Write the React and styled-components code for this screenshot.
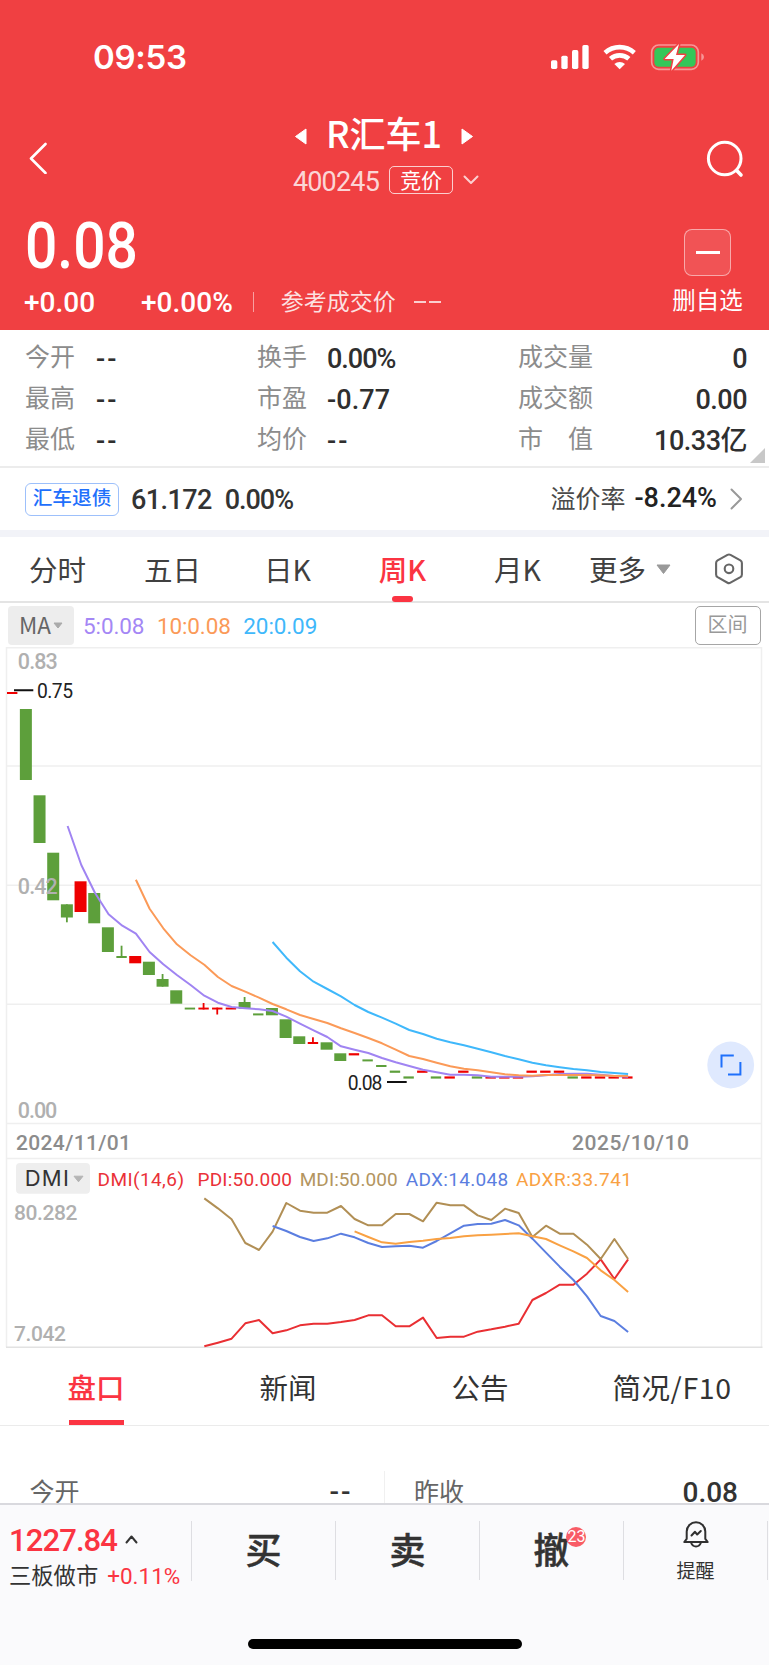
import React from "react";
import styled, { createGlobalStyle } from "styled-components";

const NUM = `Roboto, "Noto Sans CJK SC", sans-serif`;
const CJK = `"Noto Sans CJK SC", sans-serif`;

const Global = createGlobalStyle`
  * { box-sizing: border-box; }
  html, body { margin: 0; padding: 0; background: #fff; }
  body { font-family: ${CJK}; color: #333; overflow: hidden; }
  svg { display: block; flex: none; }
`;

const Screen = styled.div`
  width: 769px;
  height: 1665px;
  overflow: hidden;
  display: flex;
  flex-direction: column;
  background: #fff;
`;

const Label = styled.span`
  font-family: ${CJK};
  font-size: ${(p) => p.$size || 25}px;
  font-weight: ${(p) => p.$weight || 400};
  color: ${(p) => p.$color || "inherit"};
  letter-spacing: ${(p) => p.$ls || 0}px;
  line-height: 1;
  white-space: pre;
  flex: none;
  transform: translateY(${(p) => p.$dy ?? -1}px);
`;

const Num = styled(Label)`
  font-family: ${NUM};
  font-weight: ${(p) => p.$weight || 500};
`;

const Price = styled(Num)`
  transform: translate(1px, 2px) scaleX(0.89);
  transform-origin: left center;
`;

/* ---------- header ---------- */
const Header = styled.header`
  height: 330px;
  flex: none;
  background: #f04042;
  color: #fff;
  display: flex;
  flex-direction: column;
`;

const StatusBar = styled.div`
  height: 80px;
  padding: 35px 49px 0 93px;
  display: flex;
  justify-content: space-between;
`;

const Clock = styled.span`
  font-family: Inter, sans-serif;
  font-weight: 600;
  font-size: 33px;
  line-height: 45px;
  letter-spacing: -0.3px;
`;

const TitleBar = styled.div`
  height: 120px;
  padding: 0 24px 0 28px;
  display: flex;
  justify-content: space-between;
  align-items: flex-start;
`;

const IconSlot = styled.div`
  width: 40px;
  padding-top: ${(p) => p.$top}px;
  display: flex;
  justify-content: ${(p) => p.$align};
`;

const TitleBlock = styled.div`
  padding-top: 36px;
  margin-right: 1px;
  display: flex;
  flex-direction: column;
  align-items: center;
`;

const TitleRow = styled.div`
  height: 40px;
  padding-right: 4px;
  display: flex;
  align-items: center;
  gap: 19px;
`;

const CodeRow = styled.div`
  height: 28px;
  margin-top: 10px;
  display: flex;
  align-items: center;
  gap: 10px;
`;

const AuctionTag = styled.span`
  width: 64px;
  height: 28px;
  border: 1.5px solid rgba(255, 255, 255, 0.75);
  border-radius: 5px;
  display: flex;
  align-items: center;
  justify-content: center;
`;

const PriceArea = styled.div`
  height: 130px;
  padding: 0 26px 0 24px;
  display: flex;
  justify-content: space-between;
`;

const PriceColumn = styled.div`
  padding-top: 13px;
  display: flex;
  flex-direction: column;
  gap: 9px;
`;

const ChangeRow = styled.div`
  height: 28px;
  display: flex;
  align-items: center;
  margin-top: 2px;
`;

const Bar = styled.i`
  width: ${(p) => p.$w || 1}px;
  height: ${(p) => p.$h}px;
  margin: ${(p) => p.$m || 0};
  background: ${(p) => p.$color};
  flex: none;
`;

const RemoveButton = styled.div`
  width: 71px;
  padding-top: 29px;
  display: flex;
  flex-direction: column;
  align-items: center;
  gap: 13px;
`;

const MinusBox = styled.div`
  width: 47px;
  height: 47px;
  border: 1.5px solid rgba(255, 255, 255, 0.5);
  border-radius: 8px;
  background: rgba(255, 255, 255, 0.1);
  display: flex;
  align-items: center;
  justify-content: center;
`;

/* ---------- quote statistics ---------- */
const Stats = styled.section`
  height: 138px;
  flex: none;
  padding: 7px 0 0 25px;
  border-bottom: 2px solid #ececec;
  display: grid;
  grid-template-columns: 232px 261px 1fr;
  grid-auto-rows: 41px;
  position: relative;
`;

const Stat = styled.div`
  display: flex;
  align-items: center;
  color: #2f2f2f;
  gap: ${(p) => p.$gap || 0}px;
  ${(p) => p.$wide && "justify-content: space-between; padding-right: 22px;"}
`;

const Corner = styled.i`
  position: absolute;
  right: 4px;
  bottom: 3px;
  border-left: 15px solid transparent;
  border-bottom: 15px solid #c8c8c8;
`;

const Bond = styled.section`
  height: 69px;
  flex: none;
  padding: 0 26px 0 25px;
  border-bottom: 7px solid #f2f3f8;
  display: flex;
  align-items: center;
`;

const BondTag = styled.span`
  width: 94px;
  height: 33px;
  border: 1.5px solid #9dc0fb;
  border-radius: 6px;
  display: flex;
  align-items: center;
  justify-content: center;
  margin-right: 12px;
`;

const Spacer = styled.span`
  flex: ${(p) => (p.$w ? "none" : 1)};
  width: ${(p) => p.$w || 0}px;
`;

/* ---------- period tabs ---------- */
const Periods = styled.nav`
  height: 66px;
  flex: none;
  padding-right: 26px;
  border-bottom: 2px solid #e4e4e4;
  display: flex;
`;

const Period = styled.div`
  width: 115px;
  height: 65px;
  display: flex;
  flex-direction: column;
  align-items: center;
  justify-content: space-between;
  padding-top: 19px;
  color: ${(p) => (p.$active ? "#fb3442" : "#404040")};
`;

const PeriodMark = styled.i`
  width: 21px;
  height: 6px;
  border-radius: 3px;
  background: ${(p) => (p.$active ? "#fb3442" : "transparent")};
`;

const More = styled.div`
  flex: 1;
  display: flex;
  align-items: center;
  padding-left: 14px;
  color: #404040;
`;

const MaRow = styled.div`
  height: 44px;
  flex: none;
  padding: 0 8.5px 0 8px;
  display: flex;
  align-items: center;
`;

const MaButton = styled.div`
  width: 66px;
  height: 39px;
  border-radius: 4px;
  background: #ededed;
  display: flex;
  align-items: center;
  justify-content: center;
  gap: 2px;
  margin-right: 9px;
`;

const RangeButton = styled.div`
  width: 66px;
  height: 39px;
  border: 1.5px solid #a6a6a6;
  border-radius: 5px;
  display: flex;
  align-items: center;
  justify-content: center;
`;

const ChartArea = styled.section`
  height: 701px;
  flex: none;
`;

/* ---------- detail tabs ---------- */
const DetailTabs = styled.nav`
  height: 78px;
  flex: none;
  border-bottom: 1.5px solid #ebebeb;
  display: grid;
  grid-template-columns: repeat(4, 192px);
`;

const DetailTab = styled.div`
  display: flex;
  flex-direction: column;
  align-items: center;
  justify-content: space-between;
  padding-top: 26px;
  color: ${(p) => (p.$active ? "#fb3442" : "#333")};
`;

const DetailMark = styled.i`
  width: 55px;
  height: 5px;
  background: ${(p) => (p.$active ? "#fb3442" : "transparent")};
`;

const DetailRow = styled.section`
  height: 77px;
  flex: none;
  padding-top: 45px;
  display: grid;
  grid-template-columns: 384.5px 1fr;
`;

const DetailCell = styled.div`
  height: 40px;
  padding: 0 31px 0 29.5px;
  display: flex;
  justify-content: space-between;
  align-items: center;
  border-right: ${(p) => (p.$line ? "1px solid #f0f0f0" : "none")};
`;

/* ---------- bottom bar ---------- */
const Bottom = styled.footer`
  flex: 1;
  position: relative;
  background: #fafafc;
  border-top: 2px solid #d9d9de;
  display: flex;
  flex-direction: column;
  align-items: center;
`;

const Actions = styled.div`
  width: 769px;
  height: 134px;
  padding-top: 16px;
  display: flex;
`;

const IndexBlock = styled.div`
  width: 192px;
  height: 60px;
  padding-left: 9px;
  display: flex;
  flex-direction: column;
  gap: 7px;
  border-right: 1.5px solid #dedee2;
`;

const Line = styled.div`
  display: flex;
  align-items: center;
  flex: none;
  gap: ${(p) => p.$gap}px;
  height: ${(p) => p.$h}px;
`;

const Action = styled.div`
  width: 144px;
  height: 59px;
  border-right: 1.5px solid #dedee2;
  display: flex;
  flex-direction: column;
  align-items: center;
  justify-content: ${(p) => (p.$stack ? "space-between" : "center")};
`;

const ActionLabel = styled(Label)`
  font-size: 36px;
  font-weight: 500;
  -webkit-text-stroke: 0.5px #333;
  transform: translateY(-3px);
`;

const Badged = styled.span`
  position: relative;
  display: flex;
`;

const Badge = styled.span`
  position: absolute;
  left: 33px;
  top: -6px;
  width: 20px;
  height: 20px;
  border-radius: 50%;
  background: #f85c66;
  display: flex;
  align-items: center;
  justify-content: center;
`;

const HomeBar = styled.i`
  width: 274px;
  height: 10px;
  border-radius: 5px;
  background: #000;
`;

/* ---------- icons ---------- */
const Tri = ({ d, w, h, color }) => (
  <svg width={w} height={h} viewBox={`0 0 ${w} ${h}`}>
    <path d={d} fill={color} stroke={color} strokeWidth="1" strokeLinejoin="round" />
  </svg>
);

const Chevron = ({ w, h, d, color, sw = 2 }) => (
  <svg width={w} height={h} viewBox={`0 0 ${w} ${h}`}>
    <path d={d} fill="none" stroke={color} strokeWidth={sw} strokeLinecap="round" strokeLinejoin="round" />
  </svg>
);

const SystemIcons = () => (
  <svg width="180" height="45" viewBox="0 0 540 135">
    <g fill="#fff">
      <rect x="33" y="76" width="19" height="26" rx="5" />
      <rect x="64" y="62" width="19" height="40" rx="5" />
      <rect x="96" y="45" width="19" height="57" rx="5" />
      <rect x="127" y="30" width="19" height="72" rx="5" />
    </g>
    <g fill="none" stroke="#fff" strokeWidth="14">
      <path d="M195 53A67 67 0 0 1 283 53" />
      <path d="M211.500 71.500A41 41 0 0 1 266.500 71.500" />
    </g>
    <path d="M239 103L223 87A24 24 0 0 1 255 87Z" fill="#fff" />
    <rect x="335" y="30" width="140" height="73" rx="21" fill="none" stroke="#f79697" strokeWidth="5" />
    <rect x="343" y="38" width="124" height="57" rx="13" fill="#34c759" />
    <path d="M484 55q8 3 8 11t-8 11z" fill="#f79697" />
    <path
      d="M417 27L374 72H401L394 107L435 60H408Z"
      fill="#fff"
      stroke="#f04042"
      strokeWidth="9"
      strokeLinejoin="round"
      paintOrder="stroke"
    />
  </svg>
);

const SearchIcon = () => (
  <svg width="40" height="42" viewBox="0 0 40 42">
    <g fill="none" stroke="#fff" strokeWidth="3" strokeLinecap="round">
      <circle cx="19.700" cy="20.500" r="16.300" />
      <path d="M31.700 32.500L36 37" strokeWidth="3.600" />
    </g>
  </svg>
);

const HexIcon = () => (
  <svg width="28" height="32" viewBox="0 0 28 32">
    <g fill="none" stroke="#666" strokeWidth="2.100" strokeLinejoin="round">
      <path d="M12.500 1.900Q14 1.100 15.500 1.900L25.400 7.400Q26.900 8.300 26.900 10V21.500Q26.900 23.300 25.400 24.200L15.500 29.700Q14 30.500 12.500 29.700L2.600 24.200Q1.100 23.300 1.100 21.500V10Q1.100 8.300 2.600 7.400Z" />
      <circle cx="14" cy="15.800" r="4.300" />
    </g>
  </svg>
);

const BellIcon = () => (
  <svg width="26" height="27" viewBox="0 0 26 27">
    <g fill="none" stroke="#303030" strokeWidth="2" strokeLinecap="round" strokeLinejoin="round">
      <path d="M1.300 21H24.700L22.300 17.800V10.500A9.300 9.300 0 0 0 3.700 10.500V17.800Z" />
      <path d="M8 21.500Q9.500 25.500 13 25.500T18 21.500" />
      <path d="M8.500 14.500L12 10.800L14.200 13.500L17.800 10" />
    </g>
  </svg>
);

/* ---------- chart ---------- */
const X0 = 12.2;
const STEP = 13.67;
const TOP = 647;
const cx = (i) => X0 + STEP * i;

// [colour, body top, body bottom, wick end]
const candles = [
  ["r", 692, 694], ["g", 709, 780], ["g", 795.3, 843], ["g", 852.7, 900.3], ["g", 904.3, 917.5, 922.3],
  ["r", 881.3, 912], ["g", 893, 923.3], ["g", 927.3, 952], ["g", 956, 958, 945.7], ["r", 956, 963.3],
  ["g", 961.7, 975], ["g", 979, 986.7, 974], ["g", 990.3, 1003.7], ["g", 1007.6, 1009.5], ["r", 1007.6, 1009.5, 1003],
  ["r", 1007.6, 1009.5, 1014.5], ["r", 1007.6, 1009.5], ["g", 1002, 1008.7, 997], ["g", 1013.4, 1015.4], ["g", 1008, 1015.3],
  ["g", 1019.3, 1038], ["g", 1036.3, 1044], ["r", 1042, 1044, 1037.3], ["g", 1042.3, 1049.7], ["g", 1053.3, 1061],
  ["r", 1053.2, 1055.4], ["g", 1059.4, 1061.4], ["g", 1065, 1067],
  ...["g0", "g1", "r0", "g1", "r1", "r0", "g1", "r1", "r1", "r1", "r0", "r0", "r0", "g1", "r1", "r1", "r1", "r1"].map(
    (s) => (s[1] === "0" ? [s[0], 1070.6, 1072.8] : [s[0], 1076.4, 1078.6])
  ),
];

const ma5 = [826, 865, 892.7, 914.3, 925.7, 933.7, 952, 964.3, 975, 985, 995.7, 1002.7, 1007, 1008.3, 1009.3, 1011, 1016.7, 1023.7, 1030.3, 1037, 1046.3, 1049.7, 1053, 1058, 1062.3, 1066, 1069.7, 1072.3, 1074.7, 1074.7, 1075.3, 1076.7, 1076.7, 1076.7, 1076.3, 1075.3, 1074, 1073.7, 1073.7, 1074.7, 1076, 1076.7];
const ma10 = [879.7, 908.7, 928.3, 944.3, 955.3, 964.7, 977, 986, 991.7, 997.7, 1004, 1009.3, 1015, 1019, 1023, 1028.3, 1033, 1038, 1043.3, 1049.7, 1056, 1059, 1062.7, 1066.3, 1068.7, 1070.3, 1072.3, 1074.3, 1075.3, 1075.7, 1075, 1075, 1075, 1075, 1075.3, 1076, 1076];
const ma20 = [942, 957.7, 971.3, 981.7, 989, 996.3, 1005, 1012, 1017.7, 1023.7, 1030, 1034, 1038.7, 1042.3, 1045.3, 1048.7, 1052.3, 1056, 1059.3, 1062.7, 1065.3, 1067.3, 1069, 1070.3, 1072, 1073, 1074];

// DMI series in thirds of a pixel, measured from y = 1150
const dmi = (list) => list.map((v) => 1150 + v / 3);
const mdi = dmi([145, 175, 208, 279, 300, 245, 159, 182, 188, 188, 168, 207, 226, 226, 192, 192, 214, 158, 166, 166, 196, 210, 176, 189, 261, 227, 251, 251, 284, 327, 267, 327]);
const pdi = dmi([589, 578, 566, 520, 510, 550, 541, 526, 521, 521, 516, 510, 496, 496, 529, 529, 503, 564, 560, 560, 545, 538, 530, 521, 450, 429, 404, 404, 371, 328, 387, 328]);
const adx = dmi([228, 243, 261, 273, 265, 251, 262, 279, 291, 289, 287, 293, 273, 250, 227, 222, 221, 210, 226, 266, 308, 350, 390, 439, 498, 513, 546]);
const adxr = dmi([244, 261, 277, 281, 276, 272, 267, 264, 259, 256, 254, 252, 250, 259, 267, 286, 304, 324, 361, 390, 426]);

const Series = ({ from, data, color }) => (
  <polyline
    points={data.map((y, i) => `${(cx(from + i) + 0.7).toFixed(1)},${y}`).join(" ")}
    fill="none"
    stroke={color}
    strokeWidth="2"
    strokeLinejoin="round"
  />
);

const T = ({ x, y, w, size, color, weight = 400, children }) => (
  <text x={x} y={y} textLength={w} fontSize={size} fontWeight={weight} fill={color} fontFamily={NUM}>
    {children}
  </text>
);

const Chart = () => (
  <svg width="769" height="701" viewBox={`0 ${TOP} 769 701`}>
    <g fill="none" stroke="#efefef" strokeWidth="1.500">
      <path d="M6.500 647.800H761.500M6.500 766H761.500M6.500 885.300H761.500M6.500 1004.300H761.500M6.500 1123.400H761.500M6.500 1158.400H761.500" />
      <path d="M6.500 647V1347M761.500 647V1347" />
      <path d="M6 1347.200H762.500" stroke="#e2e2e2" />
    </g>

    {candles.map(([c, a, b, w], i) => {
      const color = c === "r" ? "#ee0000" : "#5d9f3b";
      const flat = b - a < 3;
      const half = flat ? 5.2 : 6;
      const left = Math.max(cx(i) - half, 7);
      return (
        <g key={i} fill={color}>
          <rect x={left} y={a} width={cx(i) + half - left} height={b - a} />
          {w && <rect x={cx(i) - 0.9} y={Math.min(a, w)} width="1.800" height={Math.max(b, w) - Math.min(a, w)} />}
        </g>
      );
    })}

    <Series from={4} data={ma5} color="#a084f2" />
    <Series from={9} data={ma10} color="#fb9a58" />
    <Series from={19} data={ma20} color="#3fb8fb" />

    <path d="M14 690.300H33.300M387 1082H406.700" stroke="#111" strokeWidth="2" />
    <T x="17.800" y="669.300" w="40" size="21.500" color="#b0b0b0" weight={500}>0.83</T>
    <T x="17.800" y="894" w="40" size="21.500" color="#b0b0b0" weight={500}>0.42</T>
    <T x="17.800" y="1118.300" w="39.500" size="21.500" color="#b0b0b0" weight={500}>0.00</T>
    <T x="37" y="697.500" w="36" size="19.300" color="#222">0.75</T>
    <T x="347.800" y="1089.700" w="34.500" size="19.300" color="#222">0.08</T>
    <T x="16" y="1150" w="115" size="21" color="#8c8c8c" weight={500}>2024/11/01</T>
    <T x="572" y="1150" w="117" size="21" color="#8c8c8c" weight={500}>2025/10/10</T>

    <circle cx="730.700" cy="1065" r="23.400" fill="#dfe9fe" />
    <path d="M721.500 1067.500V1055.500H733.800M740.400 1062V1074.400H728" fill="none" stroke="#1f70fb" strokeWidth="2" />

    <rect x="16" y="1163" width="74" height="30.700" rx="4" fill="#eee" />
    <text x="24.800" y="1185.500" textLength="44" fontSize="22" fontFamily="Inter, sans-serif" fill="#333">DMI</text>
    <path d="M74 1176.200H83L78.500 1181.800Z" fill="#b4b4b4" stroke="#b4b4b4" strokeLinejoin="round" />
    <T x="97.500" y="1186" w="86.500" size="19" color="#ea3138">DMI(14,6)</T>
    <T x="197.500" y="1186" w="94.500" size="19" color="#ea3138">PDI:50.000</T>
    <T x="299.700" y="1186" w="98" size="19" color="#b39560">MDI:50.000</T>
    <T x="405.700" y="1186" w="102.500" size="19" color="#5b7ee0">ADX:14.048</T>
    <T x="516" y="1186" w="116" size="19" color="#f9a143">ADXR:33.741</T>
    <T x="14" y="1219.700" w="63.500" size="21" color="#b0b0b0" weight={500}>80.282</T>
    <T x="14" y="1340.500" w="52" size="21" color="#b0b0b0" weight={500}>7.042</T>

    <Series from={14} data={pdi} color="#e92f33" />
    <Series from={14} data={mdi} color="#b18f55" />
    <Series from={19} data={adx} color="#5b7ee0" />
    <Series from={25} data={adxr} color="#f9a143" />
  </svg>
);

const stats = [
  ["今开", "--", 21], ["换手", "0.00%", 20, -1], ["成交量", "0"],
  ["最高", "--", 21], ["市盈", "-0.77", 20, 0.1], ["成交额", "0.00"],
  ["最低", "--", 21], ["均价", "--", 20], ["市　值", "10.33亿"],
];

export default function App() {
  return (
    <Screen>
      <Global />
      <Header>
        <StatusBar>
          <Clock>09:53</Clock>
          <SystemIcons />
        </StatusBar>
        <TitleBar>
          <IconSlot $top={62} $align="flex-start">
            <Chevron w={20} h={32} d="M17.500 2L3 16.500L17.500 31" color="#fff" sw={2.6} />
          </IconSlot>
          <TitleBlock>
            <TitleRow>
              <Tri w={13} h={17} d="M12 1V16L1.500 8.500Z" color="#fff" />
              <Label $size={36} $weight={500} $dy={-4}>R汇车1</Label>
              <Tri w={13} h={17} d="M1 1V16L11.500 8.500Z" color="#fff" />
            </TitleRow>
            <CodeRow>
              <Num $size={27} $weight={400} $ls={-0.8} $color="rgba(255,255,255,.8)" $dy={2}>400245</Num>
              <AuctionTag><Label $size={21}>竞价</Label></AuctionTag>
              <Chevron w={16} h={10} d="M1.500 1.500L8 8L14.500 1.500" color="#fcd0d0" />
            </CodeRow>
          </TitleBlock>
          <IconSlot $top={58} $align="flex-end"><SearchIcon /></IconSlot>
        </TitleBar>
        <PriceArea>
          <PriceColumn>
            <Price $size={64}>0.08</Price>
            <ChangeRow>
              <Num $size={28} $dy={1}>+0.00</Num>
              <Spacer $w={46} />
              <Num $size={28} $dy={1}>+0.00%</Num>
              <Bar $h={20} $m="0 27px 0 20px" $color="rgba(255,255,255,.5)" />
              <Label $size={23} $color="rgba(255,255,255,.85)" $dy={-2}>参考成交价</Label>
              <Bar $w={12} $h={1.5} $m="0 3px 0 18px" $color="rgba(255,255,255,.75)" />
              <Bar $w={12} $h={1.5} $color="rgba(255,255,255,.75)" />
            </ChangeRow>
          </PriceColumn>
          <RemoveButton>
            <MinusBox><Bar $w={24} $h={3} $color="#fff" /></MinusBox>
            <Label $size={23.5} $dy={-1}>删自选</Label>
          </RemoveButton>
        </PriceArea>
      </Header>

      <Stats>
        {stats.map(([k, v, gap, ls], i) => (
          <Stat key={i} $gap={gap} $wide={!gap}>
            <Label $color="#8c8c8c" $dy={-2}>{k}</Label>
            <Num $size={27} $ls={v === "--" ? 2 : ls ?? -0.5} $dy={2}>{v}</Num>
          </Stat>
        ))}
        <Corner />
      </Stats>

      <Bond>
        <BondTag><Label $size={19.7} $color="#1f70fb" $weight={500} $dy={-2}>汇车退债</Label></BondTag>
        <Num $size={27} $ls={-0.6} $dy={1}>61.172</Num>
        <Spacer $w={13} />
        <Num $size={27} $ls={-1} $dy={1}>0.00%</Num>
        <Spacer />
        <Label $color="#4a4a4a" $dy={-2}>溢价率</Label>
        <Spacer $w={9} />
        <Num $size={27} $color="#222">-8.24%</Num>
        <Spacer $w={12} />
        <Chevron w={14} h={22} d="M2.500 1.500L12 11L2.500 20.500" color="#999" />
      </Bond>

      <Periods>
        {["分时", "五日", "日K", "周K", "月K"].map((t) => (
          <Period key={t} $active={t === "周K"}>
            <Label $size={28.5} $weight={t === "周K" ? 500 : 400}>{t}</Label>
            <PeriodMark $active={t === "周K"} />
          </Period>
        ))}
        <More>
          <Label $size={28.5} $dy={0}>更多</Label>
          <Spacer $w={10} />
          <Tri w={15} h={11} d="M1 1H14L7.500 9.500Z" color="#999" />
          <Spacer />
          <HexIcon />
        </More>
      </Periods>

      <MaRow>
        <MaButton>
          <Label $size={22.5} $color="#666">MA</Label>
          <Tri w={10} h={7} d="M1 1H9L5 6Z" color="#aaa" />
        </MaButton>
        <Num $size={22.5} $weight={400} $ls={-0.1} $color="#a487f5" $dy={1}>5:0.08</Num>
        <Spacer $w={12.5} />
        <Num $size={22.5} $weight={400} $ls={-0.1} $color="#fb9a58" $dy={1}>10:0.08</Num>
        <Spacer $w={12.5} />
        <Num $size={22.5} $weight={400} $ls={-0.1} $color="#3fb8fb" $dy={1}>20:0.09</Num>
        <Spacer />
        <RangeButton><Label $size={20} $color="#999">区间</Label></RangeButton>
      </MaRow>

      <ChartArea><Chart /></ChartArea>

      <DetailTabs>
        {["盘口", "新闻", "公告", "简况/F10"].map((t, i) => (
          <DetailTab key={t} $active={i === 0}>
            <Label $size={28.5} $ls={i === 3 ? 0.6 : 0} $weight={i === 0 ? 500 : 400}>{t}</Label>
            <DetailMark $active={i === 0} />
          </DetailTab>
        ))}
      </DetailTabs>

      <DetailRow>
        <DetailCell $line>
          <Label $color="#666">今开</Label>
          <Num $size={28} $ls={2} $dy={1}>--</Num>
        </DetailCell>
        <DetailCell>
          <Label $color="#666">昨收</Label>
          <Num $size={28} $dy={2}>0.08</Num>
        </DetailCell>
      </DetailRow>

      <Bottom>
        <Actions>
          <IndexBlock>
            <Line $h={36} $gap={8}>
              <Num $size={31} $ls={-0.9} $color="#fb3442" $dy={1}>1227.84</Num>
              <Chevron w={13} h={9} d="M1.500 7.500L6.500 1.500L11.500 7.500" color="#333" />
            </Line>
            <Line $h={24} $gap={9}>
              <Label $size={22.3} $dy={-2}>三板做市</Label>
              <Num $size={22.5} $weight={400} $color="#fb3442" $dy={0}>+0.11%</Num>
            </Line>
          </IndexBlock>
          <Action><ActionLabel>买</ActionLabel></Action>
          <Action><ActionLabel>卖</ActionLabel></Action>
          <Action>
            <Badged>
              <ActionLabel>撤</ActionLabel>
              <Badge><Num $size={16} $weight={400} $color="#fff" $dy={0}>23</Num></Badge>
            </Badged>
          </Action>
          <Action $stack>
            <BellIcon />
            <Label $size={19}>提醒</Label>
          </Action>
        </Actions>
        <HomeBar />
      </Bottom>
    </Screen>
  );
}
